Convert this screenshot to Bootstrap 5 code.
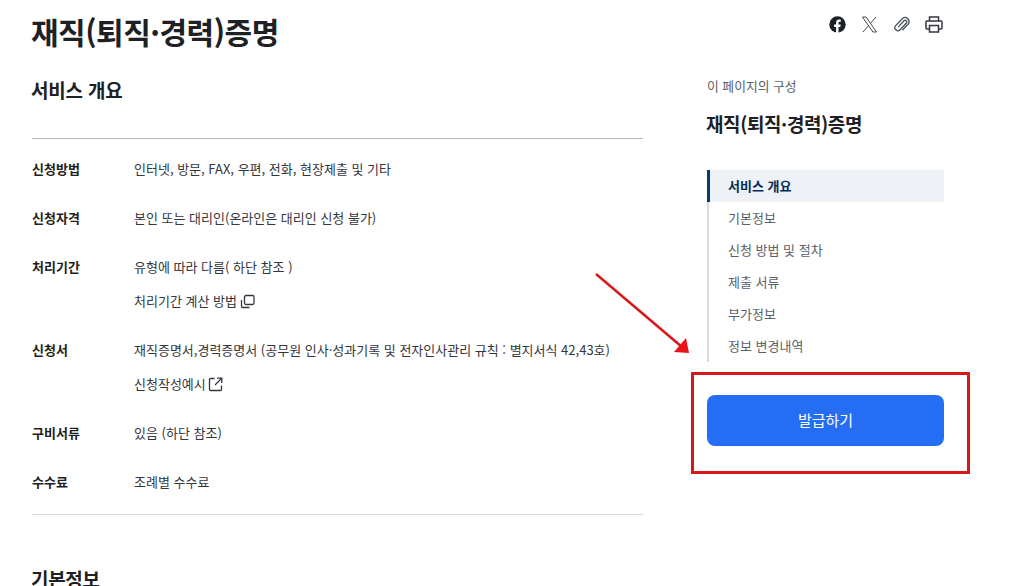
<!DOCTYPE html>
<html lang="ko">
<head>
    <meta charset="UTF-8">
    <title>재직(퇴직·경력)증명</title>
    <link rel="stylesheet" href="https://cdn.jsdelivr.net/npm/bootstrap@5.3.0/dist/css/bootstrap.min.css">
    <style>
        html, body { height: 586px; overflow: hidden; }
        body { font-family: "Noto Sans CJK KR", "Noto Sans", sans-serif; color: #1e2124; background: #fff; position: relative; }
        .page-wrap { padding: 0 32px; gap: 64px; }
        .main-col { width: 611px; flex: none; }
        .side-col { width: 237px; flex: none; }
        .page-title { font-size: 30px; font-weight: 700; line-height: 44px; letter-spacing: -0.5px; margin: 9px 0 0 -1px; color: #1e2124; }
        .sec-title { font-size: 19px; font-weight: 700; line-height: 28px; margin: 23px 0 34px -1px; letter-spacing: -0.2px; }
        .info-box { border-top: 1px solid #b1b8be; border-bottom: 1px solid #d6dade; padding: 18px 0 20px; }
        .info-row { display: flex; font-size: 13px; line-height: 24px; margin-bottom: 25px; color: #33363d; }
        .info-row:last-child { margin-bottom: 0; }
        .info-row dt { width: 102px; flex: none; font-weight: 700; color: #1e2124; }
        .info-row dd { margin: 0; }
        .info-row dd div + div { margin-top: 10px; }
        .info-row svg { vertical-align: -3px; margin-left: -1px; }
        .next-title { font-size: 19px; font-weight: 700; line-height: 28px; margin-top: 50px; margin-left: -1px; letter-spacing: -0.3px; }
        .share-bar { gap: 15px; height: 50px; padding-top: 16px; padding-right: 1px; }
        .toc-label { font-size: 12.8px; line-height: 18px; color: #5a6068; margin-top: 27px; }
        .toc-title { font-size: 19px; font-weight: 700; line-height: 28px; margin: 15px 0 32px -1px; letter-spacing: -0.4px; }
        .toc-list { border-left: 2px solid #d6dade; }
        .toc-item { font-size: 13px; line-height: 32px; padding-left: 19px; color: #5a6068; }
        .toc-item.on { background: #eef2f7; color: #052b57; font-weight: 700; border-left: 3px solid #063a74; margin-left: -2px; padding-left: 18px; }
        .issue-btn { display: block; width: 100%; height: 51px; margin-top: 33px; background: #256ef4; border: 0; border-radius: 8px; color: #fff; font-size: 15px; }
        .red-box { position: absolute; left: 691px; top: 372px; width: 279px; height: 102px; border: 3px solid #d8171b; }
        .red-arrow { position: absolute; left: 590px; top: 265px; }
    </style>
</head>
<body>
    <div class="d-flex page-wrap">
        <div class="main-col">
            <h1 class="page-title">재직(퇴직·경력)증명</h1>
            <h2 class="sec-title">서비스 개요</h2>
            <dl class="info-box mb-0">
                <div class="info-row"><dt>신청방법</dt><dd>인터넷, 방문, FAX, 우편, 전화, 현장제출 및 기타</dd></div>
                <div class="info-row"><dt>신청자격</dt><dd>본인 또는 대리인(온라인은 대리인 신청 불가)</dd></div>
                <div class="info-row"><dt>처리기간</dt><dd>
                    <div>유형에 따라 다름( 하단 참조 )</div>
                    <div>처리기간 계산 방법
                        <svg width="15" height="15" viewBox="0 0 15 15" fill="none" stroke="#33363d" stroke-width="1.3"><rect x="4.5" y="1.5" width="9.5" height="9" rx="1.5"/><path d="M1.5 6v6.5a1 1 0 0 0 1 1h7"/></svg>
                    </div>
                </dd></div>
                <div class="info-row"><dt>신청서</dt><dd>
                    <div>재직증명서,경력증명서 (공무원 인사·성과기록 및 전자인사관리 규칙 : 별지서식 42,43호)</div>
                    <div>신청작성예시
                        <svg width="15" height="15" viewBox="0 0 15 15" fill="none" stroke="#33363d" stroke-width="1.3"><path d="M6.5 1.5H2.5a1 1 0 0 0-1 1v10a1 1 0 0 0 1 1h10a1 1 0 0 0 1-1V8.5"/><path d="M9 1.2h4.8V6M13.6 1.4 7 8"/></svg>
                    </div>
                </dd></div>
                <div class="info-row"><dt>구비서류</dt><dd>있음 (하단 참조)</dd></div>
                <div class="info-row"><dt>수수료</dt><dd>조례별 수수료</dd></div>
            </dl>
            <div class="next-title">기본정보</div>
        </div>
        <div class="side-col">
            <div class="d-flex justify-content-end share-bar">
                <svg width="17" height="17" viewBox="0 0 17 17"><circle cx="8.5" cy="8.5" r="8.2" fill="#1e2124"/><path d="M7.1 17v-6H5.1V8.5h2V6.7c0-2 1.200-3.100 3-3.100.9 0 1.700.15 1.700.15v2h-1c-1 0-1.300.6-1.300 1.250V8.500h2.200l-.35 2.500H9.500v6z" fill="#fff"/></svg>
                <svg width="17" height="17" viewBox="0 0 17 17" fill="none" stroke="#464c53" stroke-width="1"><path d="M1.500 1h3.600l10.400 15h-3.600z"/><path d="M15 1 9.500 7.300M7.600 9.600 2 16"/></svg>
                <svg width="17" height="17" viewBox="0 0 17 17" fill="none" stroke="#464c53" stroke-width="1.300" stroke-linecap="round"><path d="M5.600 10.600 11 4.800a1.600 1.600 0 0 1 2.400 2.200l-6.300 6.700a3 3 0 0 1-4.400-4.100L9.500 2.500a4 4 0 0 1 5.800 5.400L9.800 13.800"/></svg>
                <svg width="18" height="17" viewBox="0 0 18 17" fill="none" stroke="#33363d" stroke-width="1.500"><path d="M4.500 5V1h9v4"/><path d="M4.500 13H2a1 1 0 0 1-1-1V6a1 1 0 0 1 1-1h14a1 1 0 0 1 1 1v6a1 1 0 0 1-1 1h-2.500"/><rect x="4.500" y="9.500" width="9" height="6.500"/></svg>
            </div>
            <div class="toc-label">이 페이지의 구성</div>
            <div class="toc-title">재직(퇴직·경력)증명</div>
            <div class="toc-list">
                <div class="toc-item on">서비스 개요</div>
                <div class="toc-item">기본정보</div>
                <div class="toc-item">신청 방법 및 절차</div>
                <div class="toc-item">제출 서류</div>
                <div class="toc-item">부가정보</div>
                <div class="toc-item">정보 변경내역</div>
            </div>
            <button type="button" class="btn issue-btn">발급하기</button>
        </div>
    </div>

    <div class="red-box"></div>
    <svg class="red-arrow" width="104" height="92" viewBox="0 0 104 92">
        <path d="M6 9 92 82" stroke="#d8171b" stroke-width="2.500"/>
        <path d="M99 88 84 87 96 73z" fill="#e8141a"/>
    </svg>

    <script src="https://cdn.jsdelivr.net/npm/bootstrap@5.3.0/dist/js/bootstrap.bundle.min.js"></script>
</body>
</html>
